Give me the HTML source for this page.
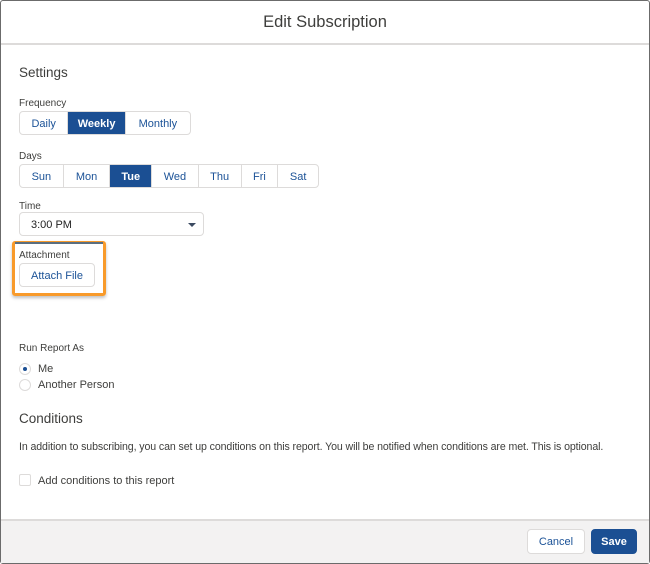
<!DOCTYPE html>
<html><head><style>
*{box-sizing:border-box;margin:0;padding:0}
body{width:650px;height:564px;background:#fff;font-family:"Liberation Sans",sans-serif;color:#3e3e3c;position:relative;overflow:hidden}
.frame{position:absolute;left:0;top:0;width:650px;height:564px;border:1px solid #6b6b6b;border-radius:3px}
.abs{position:absolute}
.hdr{left:1px;top:1px;width:648px;height:44px;border-bottom:2px solid #dddbda;text-align:center;font-size:16.5px;line-height:42px;color:#3e3e3c}
.lbl{font-size:10px;color:#3e3e3c}
.grp{display:flex;border:1px solid #dddbda;border-radius:4px;overflow:hidden;height:24px}
.grp div{border-right:1px solid #dddbda;font-size:11px;color:#1b5297;display:flex;align-items:center;justify-content:center;padding-top:1px}
.grp div:last-child{border-right:none}
.grp .on{background:#1b4f93;color:#fff;font-weight:bold}
.btn{border:1px solid #dddbda;border-radius:4px;font-size:11px;color:#1b5297;display:flex;align-items:center;justify-content:center;background:#fff;padding-top:1px}
.radio{width:12px;height:12px;border:1px solid #dddbda;border-radius:50%}
</style></head><body>
<div class="frame"></div>
<div class="abs hdr">Edit Subscription</div>
<div class="abs" style="left:19px;top:65px;font-size:13.5px">Settings</div>
<div class="abs lbl" style="left:19px;top:98px">Frequency</div>
<div class="abs grp" style="left:19px;top:111px;width:172px">
<div style="width:49px">Daily</div><div class="on" style="width:58px">Weekly</div><div style="width:65px">Monthly</div></div>
<div class="abs lbl" style="left:19px;top:151px">Days</div>
<div class="abs grp" style="left:19px;top:164px;width:300px">
<div style="width:44px">Sun</div><div style="width:47px">Mon</div><div class="on" style="width:42px">Tue</div><div style="width:47px">Wed</div><div style="width:43px">Thu</div><div style="width:37px">Fri</div><div style="width:40px">Sat</div></div>
<div class="abs lbl" style="left:19px;top:201px">Time</div>
<div class="abs" style="left:19px;top:212px;width:185px;height:24px;border:1px solid #dddbda;border-radius:4px;font-size:11px;line-height:24px;padding-left:11px;color:#222">3:00 PM
<div class="abs" style="right:7px;top:10px;width:0;height:0;border-left:4px solid transparent;border-right:4px solid transparent;border-top:4px solid #3b4a61"></div></div>
<div class="abs" style="left:12px;top:241px;width:94px;height:55px;border:3px solid #f89a2a;border-radius:3px;box-shadow:0 2px 3px rgba(0,0,0,.25)"></div>
<div class="abs" style="left:15px;top:242px;width:88px;height:2px;background:#5a6e80"></div>
<div class="abs lbl" style="left:19px;top:250px">Attachment</div>
<div class="abs btn" style="left:19px;top:263px;width:76px;height:24px">Attach File</div>
<div class="abs lbl" style="left:19px;top:343px">Run Report As</div>
<div class="abs radio" style="left:19px;top:363px"><div style="width:4px;height:4px;border-radius:50%;background:#1b4f93;margin:3px"></div></div>
<div class="abs" style="left:38px;top:363px;font-size:11px">Me</div>
<div class="abs radio" style="left:19px;top:379px"></div>
<div class="abs" style="left:38px;top:379px;font-size:11px">Another Person</div>
<div class="abs" style="left:19px;top:411px;font-size:13.5px">Conditions</div>
<div class="abs" style="left:19px;top:441px;font-size:10.6px;letter-spacing:-0.1px;white-space:nowrap">In addition to subscribing, you can set up conditions on this report. You will be notified when conditions are met. This is optional.</div>
<div class="abs" style="left:19px;top:474px;width:12px;height:12px;border:1px solid #dddbda;border-radius:2px"></div>
<div class="abs" style="left:38px;top:475px;font-size:11px">Add conditions to this report</div>
<div class="abs" style="left:1px;top:519px;width:648px;height:44px;background:#f3f2f2;border-top:2px solid #dddbda"></div>
<div class="abs btn" style="left:527px;top:529px;width:58px;height:25px">Cancel</div>
<div class="abs btn" style="left:591px;top:529px;width:46px;height:25px;background:#1b4f93;border-color:#1b4f93;color:#fff;font-weight:bold">Save</div>
</body></html>
